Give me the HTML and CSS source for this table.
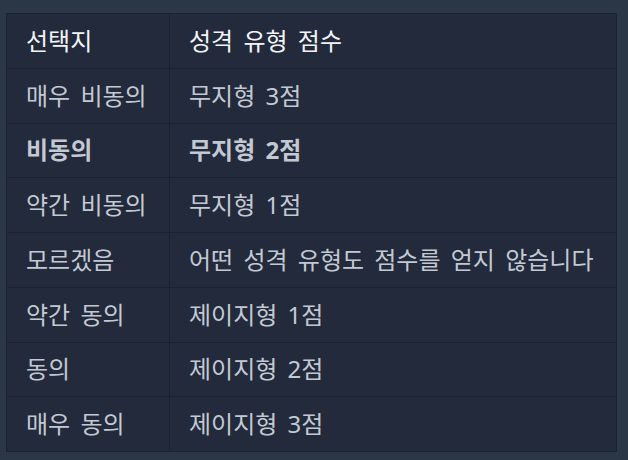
FILE: index.html
```html
<!DOCTYPE html>
<html lang="ko">
<head>
<meta charset="utf-8">
<link rel="stylesheet" href="styles.css">
</head>
<body>
<div class="wrap">
<table class="score-table">
  <thead>
    <tr><th class="c1">선택지</th><th>성격 유형 점수</th></tr>
  </thead>
  <tbody>
    <tr><td class="c1">매우 비동의</td><td>무지형 3점</td></tr>
    <tr class="strong"><td class="c1">비동의</td><td>무지형 2점</td></tr>
    <tr><td class="c1">약간 비동의</td><td>무지형 1점</td></tr>
    <tr><td class="c1">모르겠음</td><td>어떤 성격 유형도 점수를 얻지 않습니다</td></tr>
    <tr><td class="c1">약간 동의</td><td>제이지형 1점</td></tr>
    <tr><td class="c1">동의</td><td>제이지형 2점</td></tr>
    <tr><td class="c1">매우 동의</td><td>제이지형 3점</td></tr>
  </tbody>
</table>
</div>
</body>
</html>
```
FILE: styles.css
```css
html, body {
  margin: 0;
  padding: 0;
  background: #2b3647;
}
.wrap {
  padding: 13px 11px 9px 6px;
}
.score-table {
  width: 611px;
  border-collapse: collapse;
  background: #222a3b;
  border: 1px solid #1b2130;
  font-family: "Noto Sans", "Noto Sans CJK KR", sans-serif;
  font-size: 24px;
  word-spacing: 4px;
  color: #c3c9d3;
}
.score-table th,
.score-table td {
  height: 53.75px;
  padding: 0 0 0 19px;
  border: 1px solid #1b2130;
  text-align: left;
  vertical-align: middle;
  font-weight: 400;
  line-height: 1;
}
.score-table th {
  color: #f2f4f7;
}
.score-table .c1 {
  width: 143px;
}
.strong td {
  font-weight: 700;
}
```
